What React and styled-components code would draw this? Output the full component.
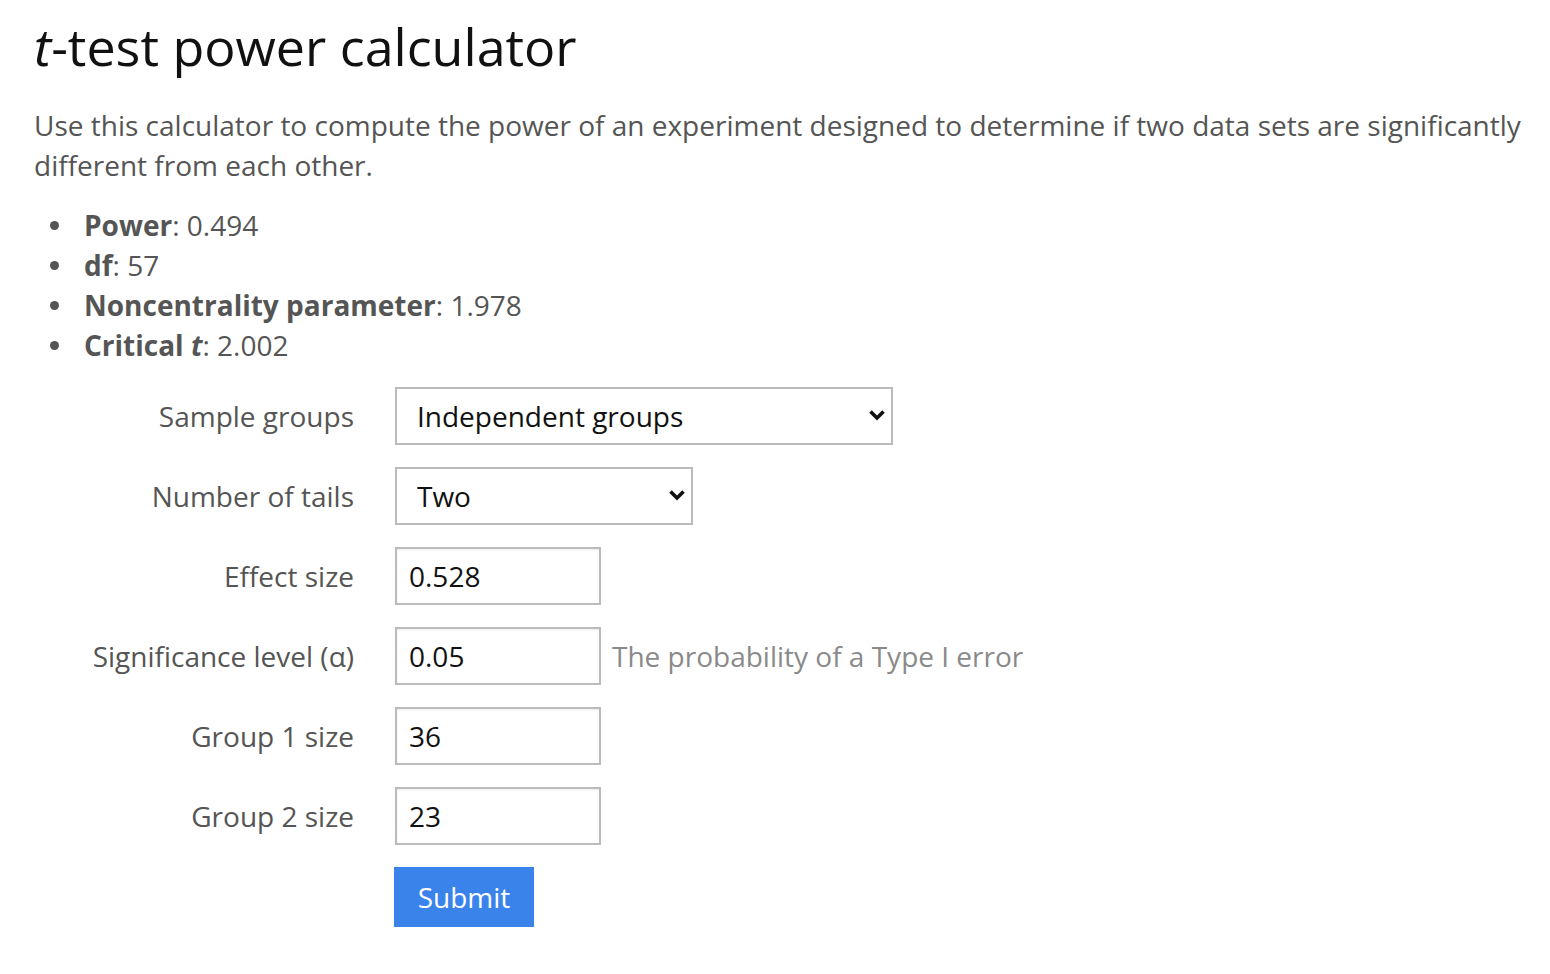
import React from 'react'
import styled, { createGlobalStyle } from 'styled-components'

const GlobalStyle = createGlobalStyle`
  body {
    margin: 0;
    background: #ffffff;
    font-family: "Open Sans", "Noto Sans", sans-serif;
  }
`;

const Page = styled.main`
  padding: 11px 20px 40px 34px;
  color: #555555;
`;

const Title = styled.h1`
  margin: 0;
  font-size: 52px;
  font-weight: 400;
  line-height: 70px;
  color: #111111;
`;

const Intro = styled.p`
  margin: 24px 0 0 0;
  font-size: 28px;
  line-height: 40px;
`;

const Results = styled.ul`
  margin: 20px 0 0 0;
  padding-left: 50px;
  list-style: none;
  font-size: 28px;
  line-height: 40px;
`;

const Item = styled.li`
  position: relative;

  &::before {
    content: '';
    position: absolute;
    left: -34px;
    top: 16px;
    width: 9px;
    height: 9px;
    border-radius: 50%;
    background: #555555;
  }
`;

const Form = styled.form`
  margin-top: 22px;
  display: grid;
  grid-template-columns: 320px auto;
  column-gap: 41px;
  row-gap: 22px;
  align-items: center;
`;

const Label = styled.label`
  text-align: right;
  font-size: 28px;
  color: #555555;
`;

const Field = styled.div`
  display: flex;
  align-items: center;
  gap: 11px;
`;

const SelectWrap = styled.div`
  position: relative;
  width: ${p => p.$width}px;
`;

const Select = styled.select`
  appearance: none;
  width: 100%;
  height: 58px;
  box-sizing: border-box;
  border: 2px solid #bbbbbb;
  border-radius: 0;
  background: #ffffff;
  padding: 0 40px 0 20px;
  font-family: inherit;
  font-size: 28px;
  color: #111111;
`;

const Chevron = styled.svg`
  position: absolute;
  right: 7px;
  top: 22px;
  pointer-events: none;
`;

const Input = styled.input`
  width: 206px;
  height: 58px;
  box-sizing: border-box;
  border: 2px solid #bbbbbb;
  box-shadow: inset 0 1px 2px rgba(0, 0, 0, 0.08);
  border-radius: 0;
  padding: 0 12px;
  font-family: inherit;
  font-size: 28px;
  color: #111111;
`;

const Hint = styled.span`
  font-size: 28px;
  color: #8a8a8a;
`;

const Button = styled.button`
  grid-column: 2;
  justify-self: start;
  width: 140px;
  height: 60px;
  border: none;
  background: #3983eb;
  color: #ffffff;
  font-family: inherit;
  font-size: 28px;
  margin-left: -1px;
`;

const Dropdown = ({ width, value }) => (
  <SelectWrap $width={width}>
    <Select defaultValue={value}>
      <option>{value}</option>
    </Select>
    <Chevron width="18" height="13" viewBox="0 0 18 13">
      <path d="M2.5 2.5 L9 9 L15.5 2.5" fill="none" stroke="#111" strokeWidth="3.6" />
    </Chevron>
  </SelectWrap>
);

const App = () => {
  return (
    <>
      <GlobalStyle />
      <Page>
        <Title><i>t</i>-test power calculator</Title>
        <Intro>
          Use this calculator to compute the power of an experiment designed to determine if two data sets are significantly different from each other.
        </Intro>
        <Results>
          <Item><b>Power</b>: 0.494</Item>
          <Item><b>df</b>: 57</Item>
          <Item><b>Noncentrality parameter</b>: 1.978</Item>
          <Item><b>Critical <i>t</i></b>: 2.002</Item>
        </Results>
        <Form onSubmit={e => e.preventDefault()}>
          <Label>Sample groups</Label>
          <Field><Dropdown width={498} value="Independent groups" /></Field>
          <Label>Number of tails</Label>
          <Field><Dropdown width={298} value="Two" /></Field>
          <Label>Effect size</Label>
          <Field><Input defaultValue="0.528" /></Field>
          <Label>Significance level (α)</Label>
          <Field>
            <Input defaultValue="0.05" />
            <Hint>The probability of a Type I error</Hint>
          </Field>
          <Label>Group 1 size</Label>
          <Field><Input defaultValue="36" /></Field>
          <Label>Group 2 size</Label>
          <Field><Input defaultValue="23" /></Field>
          <Button type="submit">Submit</Button>
        </Form>
      </Page>
    </>
  )
}

export default App
